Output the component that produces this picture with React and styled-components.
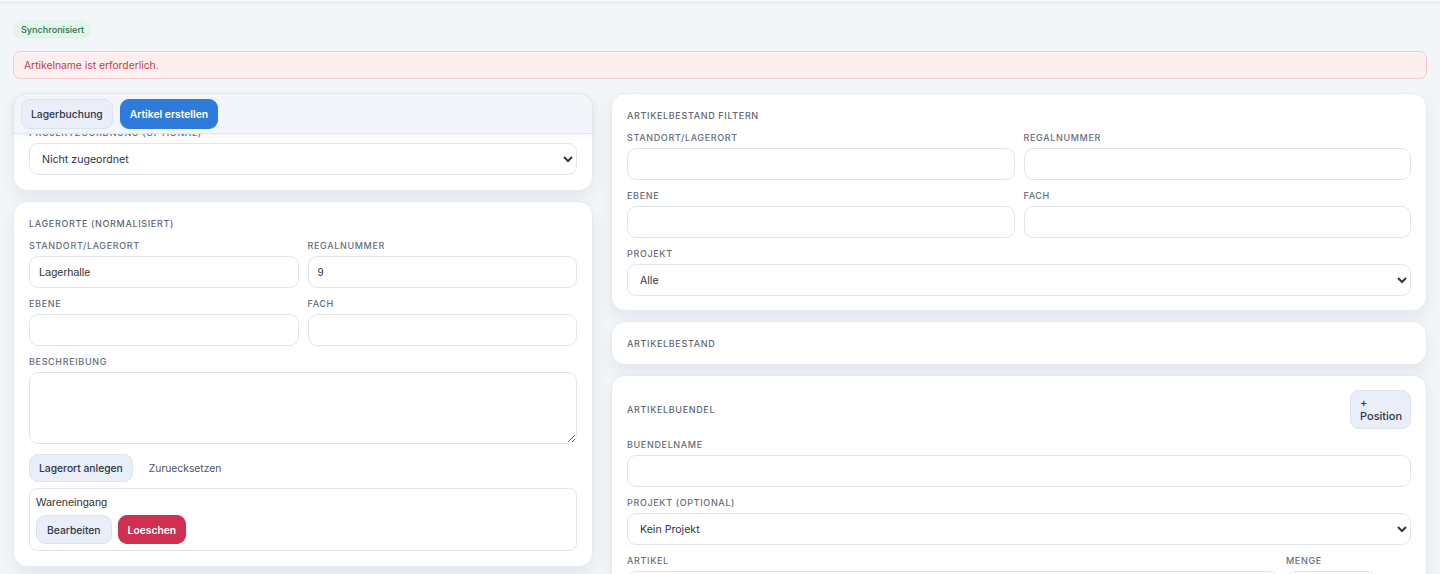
import React from 'react'
import styled, { createGlobalStyle } from 'styled-components'
import { X } from 'lucide-react'

const GlobalStyle = createGlobalStyle`
  html, body {
    margin: 0;
    background: #f3f6f9;
    font-family: Inter, "Noto Sans", sans-serif;
    color: #2d3748;
  }
  * { box-sizing: border-box; }
`

const Page = styled.div`
  border-top: 2px solid #f3f6f9;
  padding: 0 13px 40px;
  min-height: 574px;
`

const TopRule = styled.div`
  height: 1px;
  margin: 0 -13px;
  background: #e1e5eb;
`

const Badge = styled.span`
  display: inline-flex;
  align-items: center;
  height: 19px;
  margin-top: 17px;
  padding: 0 7px 0 8px;
  border-radius: 10px;
  background: #e3f5ea;
  color: #2a7048;
  font-size: 9.1px;
  font-weight: 500;
`

const Alert = styled.div`
  margin-top: 12px;
  height: 28px;
  display: flex;
  align-items: center;
  padding: 0 10px;
  border: 1px solid #f5c8cb;
  border-radius: 7px;
  background: #fdeff0;
  color: #c2414a;
  font-size: 10.3px;
`

const Columns = styled.div`
  margin-top: 14px;
  display: grid;
  grid-template-columns: 580px 1fr;
  gap: 18px;
  align-items: start;
`

const Stack = styled.div`
  display: flex;
  flex-direction: column;
  gap: 10px;
`

const Card = styled.section`
  position: relative;
  display: flex;
  flex-direction: column;
  gap: 10px;
  padding: ${p => p.$top || 16}px 15px ${p => p.$bottom || 14}px;
  background: #fff;
  border: 1px solid #e6eaf0;
  border-radius: 14px;
  box-shadow: 0 8px 16px rgba(30, 41, 59, 0.07);
`

const TabBar = styled.div`
  position: absolute;
  top: -1px;
  left: -1px;
  right: -1px;
  height: 41px;
  z-index: 1;
  display: flex;
  align-items: center;
  gap: 7px;
  padding: 0 7px;
  background: #f2f5f9;
  border: 1px solid #e1e6ed;
  border-radius: 14px 14px 0 0;
  box-shadow: 0 2px 6px rgba(30, 41, 59, 0.05);
`

const Button = styled.button`
  height: ${p => p.$h || 28}px;
  padding: 0 ${p => p.$px || 9}px;
  border-radius: 9px;
  font-family: Inter, sans-serif;
  font-size: 10.3px;
  font-weight: ${p => (p.$variant === 'soft' ? 500 : 600)};
  cursor: pointer;
  border: 1px solid
    ${p => (p.$variant === 'primary' ? '#2e7bdc' : p.$variant === 'danger' ? '#cf2f50' : '#dce3ee')};
  background: ${p =>
    p.$variant === 'primary' ? '#2e7bdc' : p.$variant === 'danger' ? '#cf2f50' : '#e9eef8'};
  color: ${p => (p.$variant === 'soft' ? '#2d3748' : '#fff')};
`

const GhostButton = styled.button`
  height: 28px;
  padding: 0 15px;
  border: none;
  background: transparent;
  font-family: Inter, sans-serif;
  font-size: 10.3px;
  color: #4a5563;
`

const Title = styled.h3`
  margin: 0;
  line-height: 12px;
  font-size: 9px;
  font-weight: 500;
  letter-spacing: 0.65px;
  text-transform: uppercase;
  color: #5f6673;
`

const Grid = styled.div`
  display: grid;
  grid-template-columns: ${p => p.$cols || '1fr 1fr'};
  gap: 10px ${p => p.$colGap || 9}px;
`

const Field = styled.label`
  display: flex;
  flex-direction: column;
  gap: 4px;
  min-width: 0;
`

const Label = styled.span`
  line-height: 12px;
  font-size: 9px;
  font-weight: 500;
  letter-spacing: 0.65px;
  text-transform: uppercase;
  color: #676e7b;
`

const Input = styled.input`
  height: 32px;
  width: 100%;
  padding: 0 9px;
  border: 1px solid #e2e6ec;
  border-radius: 9px;
  background: #fff;
  font-family: "Liberation Sans", Arial, sans-serif;
  font-size: 11px;
  color: #333;
  outline: none;
`

const Select = styled.select`
  height: 32px;
  width: 100%;
  padding: 0 8px;
  border: 1px solid #e2e6ec;
  border-radius: 9px;
  background: #fff;
  font-family: Inter, sans-serif;
  font-size: 10.6px;
  color: #2d3748;
`

const TextArea = styled.textarea`
  height: 72px;
  width: 100%;
  border: 1px solid #e2e6ec;
  border-radius: 9px;
  background: #fff;
  resize: vertical;
`

const Row = styled.div`
  display: flex;
  align-items: center;
  gap: ${p => p.$gap || 7}px;
`

const HeaderRow = styled.div`
  display: flex;
  align-items: center;
  justify-content: space-between;
`

const ListItem = styled.div`
  margin-top: -4px;
  display: flex;
  flex-direction: column;
  gap: 7px;
  padding: 7px 6px 6px;
  border: 1px solid #e2e6ec;
  border-radius: 8px;
`

const ItemName = styled.div`
  font-family: "Liberation Sans", Arial, sans-serif;
  font-size: 11px;
  color: #333;
`

const PositionButton = styled(Button)`
  height: 39px;
  width: 61px;
  padding: 0 9px;
  text-align: left;
  line-height: 13px;
  font-size: 11px;
  font-weight: 500;
`

const RemoveButton = styled.button`
  width: 28px;
  height: 32px;
  display: flex;
  align-items: center;
  justify-content: center;
  padding: 0;
  border: none;
  background: transparent;
  color: #9aa3af;
`

export default function App() {
  return (
    <>
      <GlobalStyle />
      <Page>
        <TopRule />
        <Badge>Synchronisiert</Badge>
        <Alert>Artikelname ist erforderlich.</Alert>
        <Columns>
          <Stack>
            <Card $top={33} $bottom={15}>
              <TabBar>
                <Button $variant="soft" $h={30}>Lagerbuchung</Button>
                <Button $variant="primary" $h={30}>Artikel erstellen</Button>
              </TabBar>
              <Field>
                <Label>Projektzuordnung (optional)</Label>
                <Select defaultValue="none">
                  <option value="none">Nicht zugeordnet</option>
                </Select>
              </Field>
            </Card>

            <Card $top={16} $bottom={15}>
              <Title>Lagerorte (normalisiert)</Title>
              <Grid>
                <Field>
                  <Label>Standort/Lagerort</Label>
                  <Input defaultValue="Lagerhalle" />
                </Field>
                <Field>
                  <Label>Regalnummer</Label>
                  <Input defaultValue="9" />
                </Field>
                <Field>
                  <Label>Ebene</Label>
                  <Input />
                </Field>
                <Field>
                  <Label>Fach</Label>
                  <Input />
                </Field>
              </Grid>
              <Field>
                <Label>Beschreibung</Label>
                <TextArea />
              </Field>
              <Row $gap={1}>
                <Button $variant="soft">Lagerort anlegen</Button>
                <GhostButton>Zuruecksetzen</GhostButton>
              </Row>
              <ListItem>
                <ItemName>Wareneingang</ItemName>
                <Row $gap={6}>
                  <Button $variant="soft" $h={29} $px={10}>Bearbeiten</Button>
                  <Button $variant="danger" $h={29}>Loeschen</Button>
                </Row>
              </ListItem>
            </Card>
          </Stack>

          <Stack>
            <Card>
              <Title>Artikelbestand filtern</Title>
              <Grid>
                <Field>
                  <Label>Standort/Lagerort</Label>
                  <Input />
                </Field>
                <Field>
                  <Label>Regalnummer</Label>
                  <Input />
                </Field>
                <Field>
                  <Label>Ebene</Label>
                  <Input />
                </Field>
                <Field>
                  <Label>Fach</Label>
                  <Input />
                </Field>
              </Grid>
              <Field>
                <Label>Projekt</Label>
                <Select defaultValue="all">
                  <option value="all">Alle</option>
                </Select>
              </Field>
            </Card>

            <Card>
              <Title>Artikelbestand</Title>
            </Card>

            <Card $top={14}>
              <HeaderRow>
                <Title>Artikelbuendel</Title>
                <PositionButton $variant="soft">+ Position</PositionButton>
              </HeaderRow>
              <Field>
                <Label>Buendelname</Label>
                <Input />
              </Field>
              <Field>
                <Label>Projekt (optional)</Label>
                <Select defaultValue="none">
                  <option value="none">Kein Projekt</option>
                </Select>
              </Field>
              <Grid $cols="1fr 90px 28px" $colGap={7}>
                <Field>
                  <Label>Artikel</Label>
                  <Select defaultValue="">
                    <option value=""></option>
                  </Select>
                </Field>
                <Field>
                  <Label>Menge</Label>
                  <Input defaultValue="1" />
                </Field>
                <Field>
                  <Label>&nbsp;</Label>
                  <RemoveButton aria-label="Entfernen">
                    <X size={14} strokeWidth={2} />
                  </RemoveButton>
                </Field>
              </Grid>
            </Card>
          </Stack>
        </Columns>
      </Page>
    </>
  )
}
